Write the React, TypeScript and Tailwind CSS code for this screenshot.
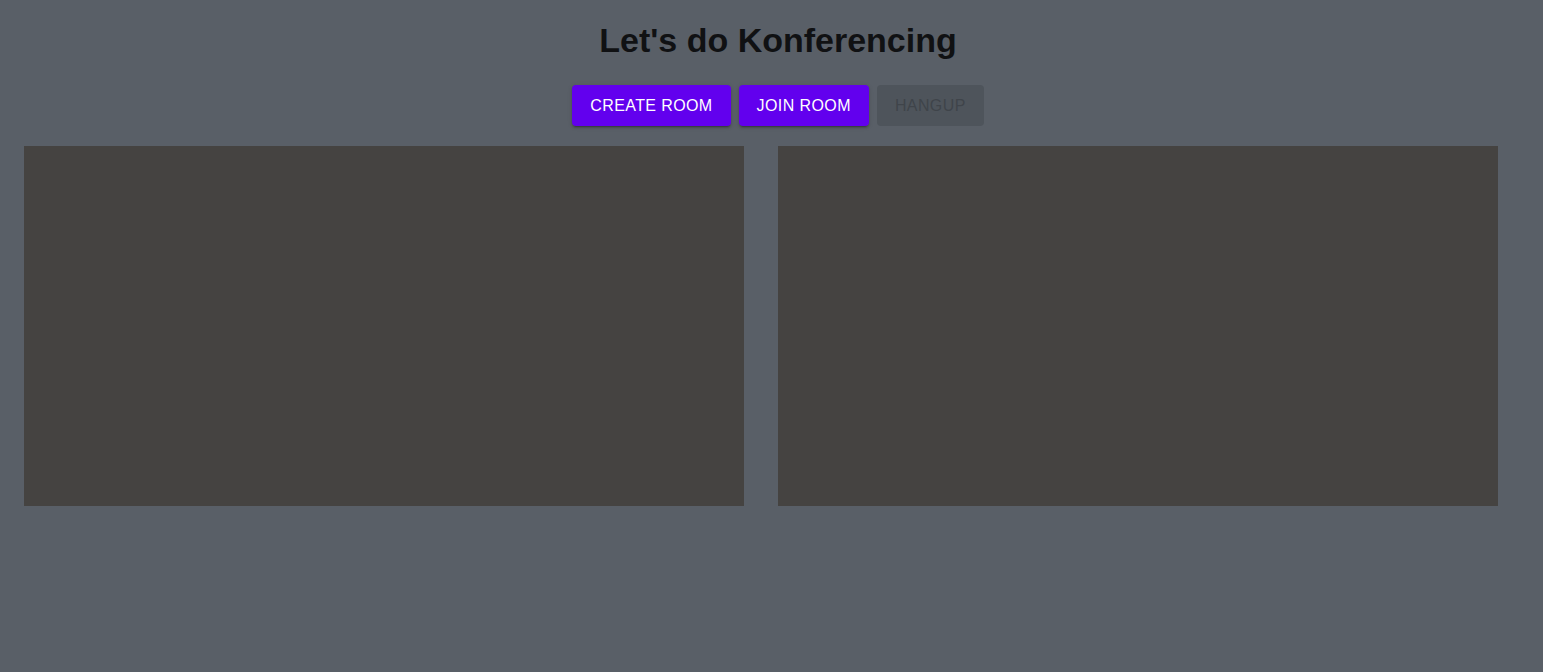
const buttonBase =
  "rounded px-[18px] py-2 text-[16px] leading-[25px] font-normal uppercase tracking-[0.4px] font-['Liberation_Sans',Arial,sans-serif]";

const raised =
  "shadow-[0_3px_1px_-2px_rgba(0,0,0,0.2),0_2px_2px_0_rgba(0,0,0,0.14),0_1px_5px_0_rgba(0,0,0,0.12)]";

const App = () => {
  return (
    <main className="min-h-[672px] w-full bg-[#595f67] font-['Liberation_Sans',Arial,sans-serif]">
      <section className="flex flex-col items-center pt-[23px] pl-[13px]">
        <h1 className="text-[34px] leading-[34px] font-bold text-[#101113]">
          Let's do Konferencing
        </h1>
        <div className="mt-[28px] flex gap-2">
          <button className={`${buttonBase} bg-[#6200ee] text-white ${raised}`}>
            Create room
          </button>
          <button className={`${buttonBase} bg-[#6200ee] text-white ${raised}`}>
            Join room
          </button>
          <button disabled className={`${buttonBase} bg-[#4e545b] text-[#3f444a]`}>
            Hangup
          </button>
        </div>
      </section>
      <div className="mt-5 flex gap-[34px] pl-6">
        <div className="h-[360px] w-[720px] bg-[#454341]" />
        <div className="h-[360px] w-[720px] bg-[#454341]" />
      </div>
    </main>
  );
};

export default App;
